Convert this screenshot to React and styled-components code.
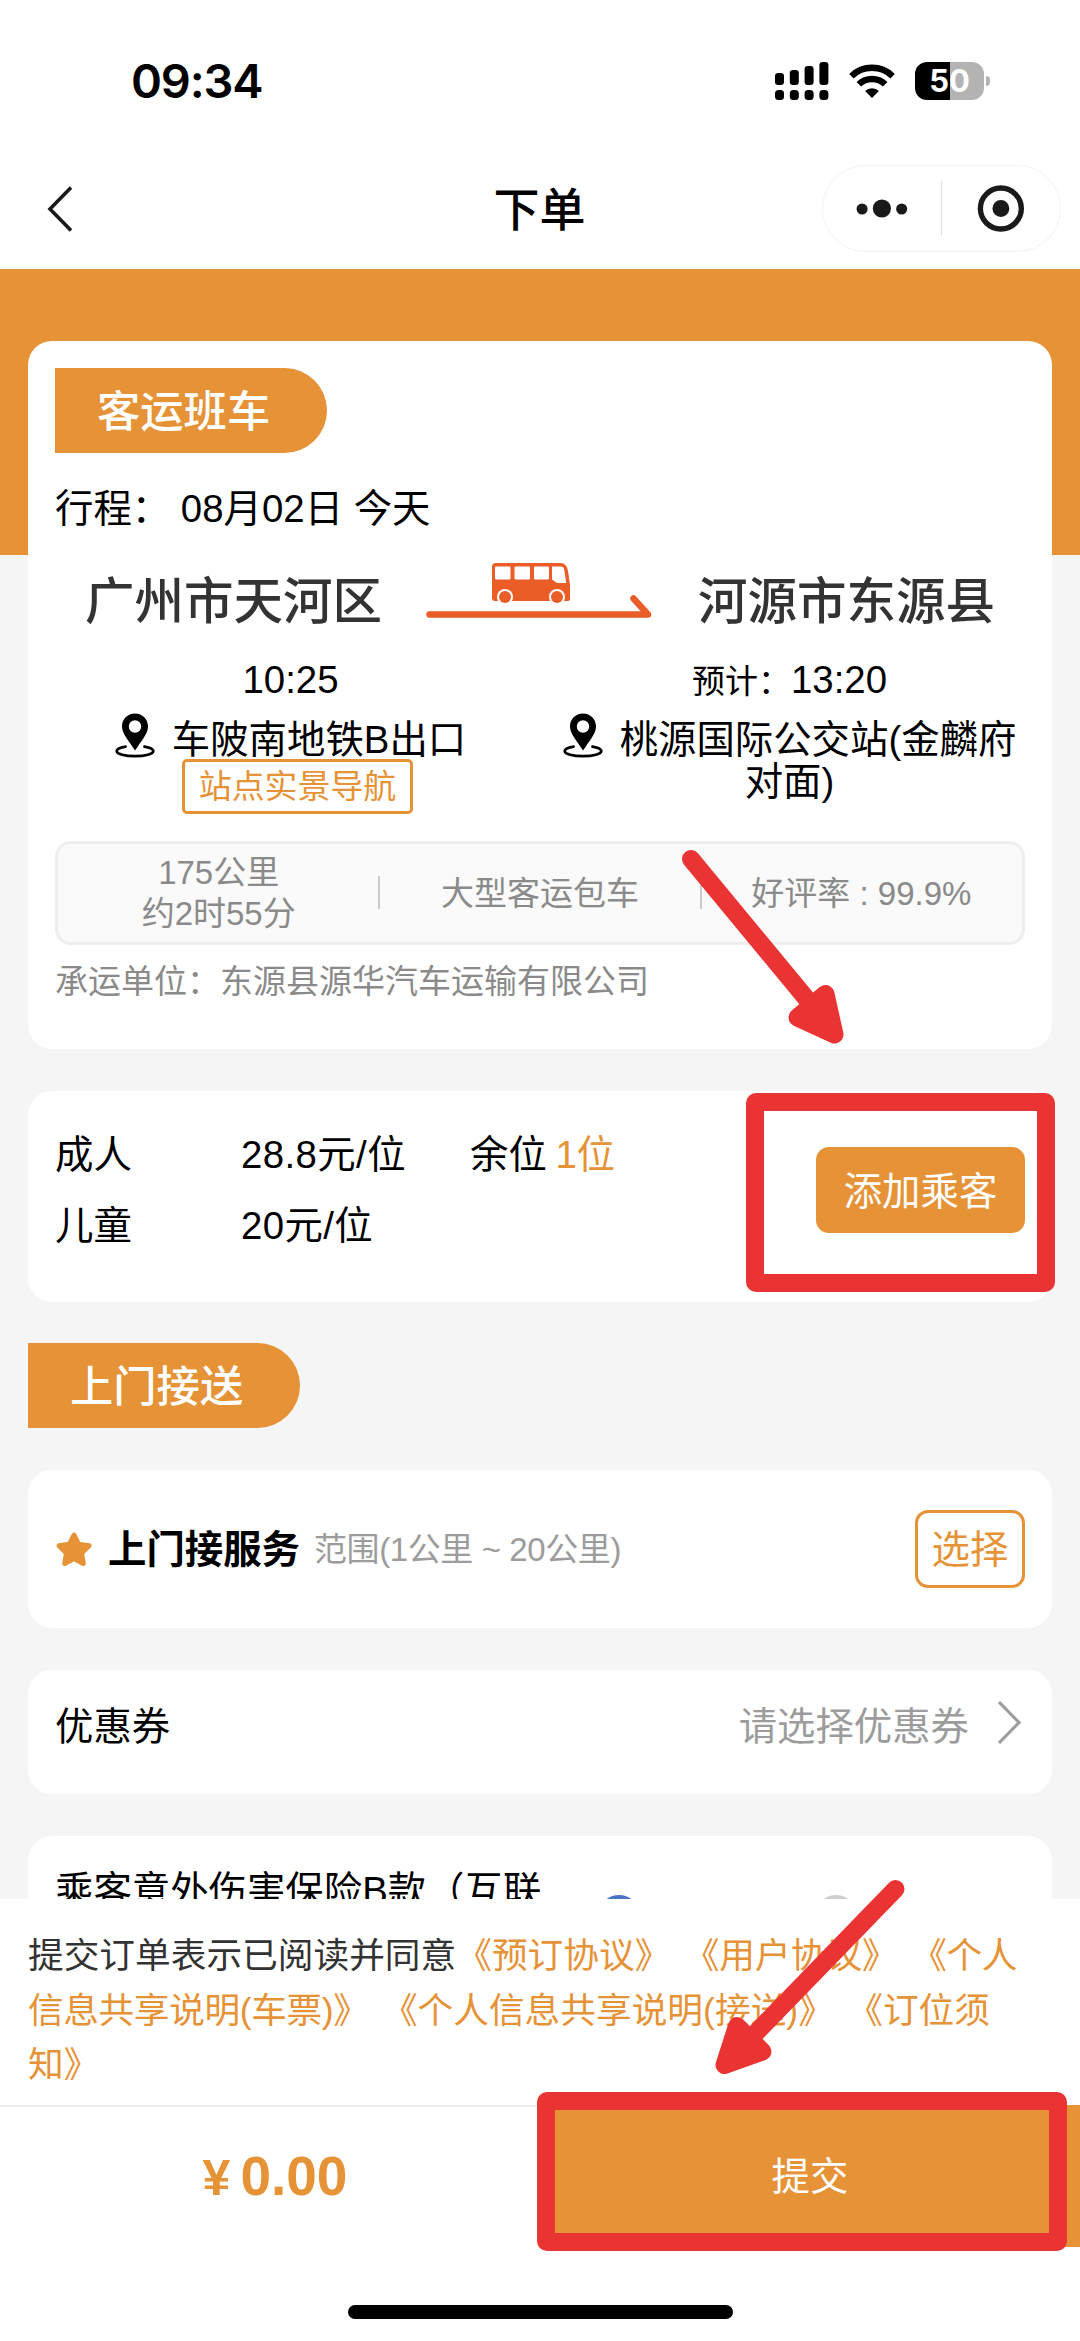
import styled, { createGlobalStyle, ThemeProvider } from "styled-components";

const theme = {
  orange: "#e69237",
  busOrange: "#ea5d27",
  red: "#ea3434",
  black: "#000",
  ink: "#333",
  grey: "#8a8a8a",
  lightgrey: "#9c9c9c",
  offWhite: "#f5f5f5",
  sans: `"Liberation Sans", "Noto Sans CJK SC", sans-serif`
};

const GlobalStyle = createGlobalStyle`
  *, *:before, *:after {
    box-sizing: border-box;
  }
  body {
    margin: 0;
    background: white;
  }
`;

const Page = styled.div`
  position: relative;
  display: flex;
  flex-direction: column;
  width: 1080px;
  height: 2341px;
  overflow: hidden;
  background: white;
  color: ${props => props.theme.black};
  font-family: ${props => props.theme.sans};
  font-size: 38.4px;
  line-height: 44px;
`;

/* ---------- top of the screen ---------- */

const StatusBar = styled.div`
  flex: none;
  display: flex;
  justify-content: space-between;
  align-items: center;
  height: 140px;
  padding: 21px 90px 0 131px;
`;

const Clock = styled.span`
  font-family: Inter, sans-serif;
  font-size: 47px;
  font-weight: 600;
  letter-spacing: -1.2px;
`;

const StatusIcons = styled.div`
  display: flex;
  align-items: center;
  gap: 20px;
`;

const Battery = styled.div`
  position: relative;
  width: 69px;
  height: 38px;
  margin-right: 6px;
  border-radius: 12px;
  background: linear-gradient(90deg, #000 51%, #b3b3b3 51%);
  color: white;
  font-family: Inter, sans-serif;
  font-size: 31px;
  font-weight: 700;
  line-height: 38px;
  text-align: center;
  &:after {
    content: "";
    position: absolute;
    right: -6px;
    top: 14px;
    width: 4px;
    height: 10px;
    border-radius: 0 4px 4px 0;
    background: #b3b3b3;
  }
`;

const NavBar = styled.div`
  flex: none;
  display: grid;
  grid-template-columns: 1fr auto 1fr;
  align-items: center;
  height: 129px;
  padding: 8px 19px 0 46px;
`;

const NavTitle = styled.h1`
  margin: 0;
  padding: 2px 28px 0 0;
  font-size: 46px;
  font-weight: 500;
  line-height: 60px;
`;

const Capsule = styled.div`
  justify-self: end;
  display: flex;
  align-items: center;
  width: 239px;
  height: 87px;
  border: 1.5px solid #f3f3f3;
  border-radius: 44px;
  svg {
    flex: 1;
  }
`;

const CapsuleLine = styled.div`
  width: 1.5px;
  height: 55px;
  background: #dedede;
`;

/* ---------- scrolling content ---------- */

const Content = styled.main`
  flex: none;
  height: 1630px;
  overflow: hidden;
  padding: 72px 28px 0;
  background: linear-gradient(
    ${props => props.theme.orange} 286px,
    ${props => props.theme.offWhite} 286px
  );
`;

const Card = styled.section`
  height: ${props => props.$height}px;
  margin-bottom: ${props => props.$gap}px;
  padding: 0 27px;
  border-radius: 24px;
  background: white;
`;

const TripCard = styled(Card)`
  padding-top: 27px;
`;

const RowCard = styled(Card)`
  display: flex;
  justify-content: space-between;
  align-items: center;
`;

const Badge = styled.h2`
  width: 272px;
  height: 85px;
  margin: 0 0 ${props => props.$gap}px;
  padding-left: 42px;
  border-radius: 0 43px 43px 0;
  background: ${props => props.theme.orange};
  color: white;
  font-size: 43.3px;
  font-weight: 500;
  line-height: 88px;
`;

const TripDate = styled.p`
  margin: 0;
  line-height: 46px;
`;

const Route = styled.div`
  display: flex;
  align-items: center;
  margin-top: 40px;
  padding-left: 30px;
  height: 60px;
`;

const City = styled.strong`
  width: 300px;
  color: ${props => props.theme.ink};
  font-size: 49.5px;
  font-weight: 500;
  line-height: 60px;
  white-space: nowrap;
`;

const RouteArrow = styled.svg`
  flex: none;
  margin: -25px 38px 0 35px;
`;

const Stops = styled.div`
  display: grid;
  grid-template-columns: 1fr 1fr;
  margin-top: 26px;
`;

const Stop = styled.div`
  text-align: center;
  padding: ${props => (props.$arrival ? "0 0 0 14px" : "0 14px 0 0")};
`;

const StopTime = styled.div`
  height: 44px;
  small {
    font-size: 33px;
    line-height: 1;
  }
`;

const StopName = styled.div`
  margin-top: 17px;
  line-height: 41.5px;
  svg {
    margin: -10px 17px -10px 0;
    vertical-align: 5px;
  }
`;

const PhotoNavButton = styled.button`
  display: block;
  width: 231px;
  height: 55px;
  margin: -2px auto 0;
  padding: 0;
  border: 3px solid ${props => props.theme.orange};
  border-radius: 5px;
  background: white;
  color: ${props => props.theme.orange};
  font-family: inherit;
  font-size: 32.9px;
  line-height: 49px;
  transform: translateX(7px);
`;

const Facts = styled.div`
  display: grid;
  grid-template-columns: repeat(3, 1fr);
  align-items: center;
  height: 104px;
  margin-top: 27px;
  border: 3px solid #eee;
  border-radius: 16px;
  background: #fafafa;
  color: ${props => props.theme.grey};
  font-size: 33px;
  line-height: 41px;
  text-align: center;
`;

const Fact = styled.div`
  display: flex;
  flex-direction: column;
  justify-content: center;
  padding-top: 1px;
  & + & {
    position: relative;
  }
  & + &:before {
    content: "";
    position: absolute;
    left: -1px;
    top: 50%;
    width: 2px;
    height: 33px;
    margin-top: -17px;
    background: #ccc;
  }
`;

const Carrier = styled.p`
  margin: 15px 0 0;
  color: ${props => props.theme.grey};
  font-size: 33px;
`;

const FareTable = styled.div`
  display: grid;
  grid-template-columns: 186px 229px auto;
  row-gap: 27px;
  margin-top: -13px;
`;

const Fare = styled.span`
  letter-spacing: 0.4px;
`;

const Seats = styled.span`
  margin-left: -2px;
  color: ${props => props.theme.orange};
`;

const AddButton = styled.button`
  width: 209px;
  height: 86px;
  margin-top: -13px;
  padding: 3px 0 0;
  border: 0;
  border-radius: 13px;
  background: ${props => props.theme.orange};
  color: white;
  font-family: inherit;
  font-size: 38.4px;
  line-height: 44px;
`;

const ServiceName = styled.div`
  display: flex;
  align-items: center;
  padding-top: 2px;
  strong {
    margin: 0 14px 0 15px;
    font-weight: 700;
  }
  span {
    color: ${props => props.theme.lightgrey};
    font-size: 33px;
    letter-spacing: -0.4px;
  }
`;

const ChooseButton = styled.button`
  width: 110px;
  height: 78px;
  padding: 0;
  border: 3px solid ${props => props.theme.orange};
  border-radius: 13px;
  background: white;
  color: ${props => props.theme.orange};
  font-family: inherit;
  font-size: 38.4px;
  line-height: 74px;
`;

const CouponHint = styled.span`
  display: flex;
  align-items: center;
  gap: 26px;
  color: ${props => props.theme.lightgrey};
  svg {
    margin-top: -8px;
  }
`;

const Coupon = styled(RowCard)`
  padding-bottom: 11px;
`;

const InsuranceCard = styled(Card)`
  display: flex;
  align-items: flex-start;
  padding-top: 33px;
`;

const InsuranceName = styled.div`
  flex: none;
  width: 543px;
`;

const Radio = styled.span`
  flex: none;
  width: 42px;
  height: 42px;
  margin: 26px 175px 0 0;
  border: 4px solid ${props => (props.$checked ? "#4a74c9" : "#cfcfcf")};
  border-radius: 50%;
  background: ${props => (props.$checked ? "#4a74c9" : "white")};
`;

/* ---------- footer ---------- */

const Agreement = styled.div`
  flex: none;
  height: 206px;
  padding: 30px 36px 0 28px;
  color: ${props => props.theme.ink};
  font-size: 35.7px;
  line-height: 54.5px;
  text-spacing-trim: space-all;
`;

const AgreementLink = styled.a`
  margin-right: 3.4px;
  color: ${props => props.theme.orange};
  letter-spacing: ${props => (props.$tight ? "-0.4px" : "normal")};
`;

const PayBar = styled.div`
  flex: none;
  display: grid;
  grid-template-columns: 1fr 1fr;
  grid-template-rows: 142px;
  height: 142px;
`;

const Price = styled.div`
  display: flex;
  justify-content: center;
  align-items: baseline;
  padding: 39px 0 0 10px;
  border-top: 2px solid #ededed;
  color: ${props => props.theme.orange};
  font-size: 55px;
  font-weight: 700;
  line-height: 60px;
  small {
    margin-right: 10px;
    font-size: 50px;
  }
`;

const SubmitButton = styled.button`
  padding: 2px 0 0;
  border: 0;
  background: ${props => props.theme.orange};
  color: white;
  font-family: inherit;
  font-size: 38.4px;
  line-height: 44px;
`;

const HomeBar = styled.div`
  flex: none;
  width: 385px;
  height: 14px;
  margin: 58px auto 0;
  border-radius: 7px;
  background: black;
`;

/* ---------- red marks lying over the page ---------- */

const Mark = styled.div`
  position: absolute;
  border: 18px solid ${props => props.theme.red};
  border-radius: 10px;
`;

const AddMark = styled(Mark)`
  left: 746px;
  top: 1092.5px;
  width: 309px;
  height: 199px;
`;

const SubmitMark = styled(Mark)`
  left: 537px;
  top: 2092px;
  width: 530px;
  height: 159px;
`;

const Pointers = styled.svg`
  position: absolute;
  left: 0;
  top: 0;
  pointer-events: none;
`;

const SIGNAL = [12, 15, 19, 23];

const Signal = () => (
  <svg width="54" height="38" viewBox="0 0 54 38">
    {SIGNAL.map((h, i) => (
      <g key={h}>
        <rect x={i * 14.8} y={23 - h} width="9" height={h} rx="3.2" />
        <rect x={i * 14.8} y="28" width="9" height="10" rx="3.5" />
      </g>
    ))}
  </svg>
);

const Wifi = () => (
  <svg width="46" height="34" viewBox="0 0 46 34">
    <g fill="none" stroke="#000" strokeWidth="6.4">
      <path d="M2.4 12.2a29.5 29.5 0 0 1 41.2 0" />
      <path d="M9.8 20.3a19 19 0 0 1 26.4 0" />
    </g>
    <path d="M23 34l-6.9-7a10 10 0 0 1 13.8 0z" />
  </svg>
);

const Pin = () => (
  <svg width="40" height="45" viewBox="0 0 40 45">
    <path
      fillRule="evenodd"
      d="M20 .5C12.5.5 7 6.2 7 13.4 7 20.5 14 28 20 37.5 26 28 33 20.5 33 13.4 33 6.2 27.5.5 20 .5zM20 7.3a6.2 6.2 0 1 1 0 12.4 6.2 6.2 0 0 1 0-12.4z"
    />
    <path
      d="M10.5 33.7C4.5 34.8 1.7 36.5 1.7 38c0 3 8 5.2 18.3 5.2S38.3 41 38.3 38c0-1.5-2.8-3.2-8.8-4.3"
      fill="none"
      stroke="#000"
      strokeWidth="2.8"
      strokeLinecap="round"
    />
  </svg>
);

const BusRoute = () => (
  <RouteArrow width="240" height="80" viewBox="0 0 240 80">
    <path
      d="M9.5 64.5H228L213.5 48.5"
      fill="none"
      stroke={theme.busOrange}
      strokeWidth="6.5"
      strokeLinecap="round"
      strokeLinejoin="round"
    />
    <path
      d="M76 13h64c5 0 7 3 8 8l2 14v14q0 2-2 2H75q-3 0-3-3V17q0-4 4-4z"
      fill={theme.busOrange}
    />
    <g fill="#fff">
      <rect x="75" y="16.5" width="15.5" height="13" rx="1" />
      <rect x="94.5" y="16.5" width="15.5" height="13" rx="1" />
      <rect x="114" y="16.5" width="15" height="13" rx="1" />
      <path d="M132 16.5h9q2.5 0 3.2 3l2 13.5h-9.2l-5-3.5z" />
      <circle cx="85" cy="47" r="8" />
      <circle cx="137" cy="47" r="8" />
    </g>
    <g fill={theme.busOrange}>
      <circle cx="85" cy="47" r="6" />
      <circle cx="137" cy="47" r="6" />
    </g>
  </RouteArrow>
);

const Star = () => (
  <svg width="38" height="38" viewBox="0 0 38 38">
    <path
      d="M19 4l4.6 9.3 10.4 1.5-7.5 7.3 1.8 10.4L19 27.6l-9.3 4.9 1.8-10.4L4 14.8l10.4-1.5z"
      fill={theme.orange}
      stroke={theme.orange}
      strokeWidth="5"
      strokeLinejoin="round"
    />
  </svg>
);

const App = () => {
  return (
    <ThemeProvider theme={theme}>
      <GlobalStyle />
      <Page>
        <StatusBar>
          <Clock>09:34</Clock>
          <StatusIcons>
            <Signal />
            <Wifi />
            <Battery>50</Battery>
          </StatusIcons>
        </StatusBar>
        <NavBar>
          <svg width="28" height="48" viewBox="0 0 28 48">
            <path
              d="M25 2.5L4 24l21 21.5"
              fill="none"
              stroke="#1a1a1a"
              strokeWidth="3.6"
            />
          </svg>
          <NavTitle>下单</NavTitle>
          <Capsule>
            <svg width="119" height="50" viewBox="0 0 119 50" fill="#1a1a1a">
              <circle cx="39.5" cy="25" r="5.6" />
              <circle cx="59.5" cy="24.5" r="9.2" />
              <circle cx="79.5" cy="25" r="5.6" />
            </svg>
            <CapsuleLine />
            <svg width="119" height="50" viewBox="0 0 119 50" fill="#1a1a1a">
              <circle cx="59.5" cy="24.5" r="8.5" />
              <circle
                cx="59.5"
                cy="24.5"
                r="20.7"
                fill="none"
                stroke="#1a1a1a"
                strokeWidth="5.4"
              />
            </svg>
          </Capsule>
        </NavBar>

        <Content>
          <TripCard $height={708} $gap={42}>
            <Badge $gap={33}>客运班车</Badge>
            <TripDate>行程： 08月02日 今天</TripDate>
            <Route>
              <City>广州市天河区</City>
              <BusRoute />
              <City>河源市东源县</City>
            </Route>
            <Stops>
              <Stop>
                <StopTime>10:25</StopTime>
                <StopName>
                  <Pin />
                  车陂南地铁B出口
                </StopName>
                <PhotoNavButton>站点实景导航</PhotoNavButton>
              </Stop>
              <Stop $arrival>
                <StopTime>
                  <small>预计：</small>13:20
                </StopTime>
                <StopName>
                  <Pin />
                  桃源国际公交站(金麟府对面)
                </StopName>
              </Stop>
            </Stops>
            <Facts>
              <Fact>
                <span>175公里</span>
                <span>约2时55分</span>
              </Fact>
              <Fact>大型客运包车</Fact>
              <Fact>好评率 : 99.9%</Fact>
            </Facts>
            <Carrier>承运单位：东源县源华汽车运输有限公司</Carrier>
          </TripCard>

          <RowCard $height={211} $gap={41}>
            <FareTable>
              <span>成人</span>
              <Fare>28.8元/位</Fare>
              <span>
                余位 <Seats>1位</Seats>
              </span>
              <span>儿童</span>
              <Fare>20元/位</Fare>
            </FareTable>
            <AddButton>添加乘客</AddButton>
          </RowCard>

          <Badge $gap={42}>上门接送</Badge>

          <RowCard $height={158} $gap={42}>
            <ServiceName>
              <Star />
              <strong>上门接服务</strong>
              <span>范围(1公里 ~ 20公里)</span>
            </ServiceName>
            <ChooseButton>选择</ChooseButton>
          </RowCard>

          <Coupon $height={124} $gap={42}>
            <span>优惠券</span>
            <CouponHint>
              请选择优惠券
              <svg width="30" height="46" viewBox="0 0 30 46">
                <path
                  d="M4 2l20 20.5L4 43"
                  fill="none"
                  stroke="#9c9c9c"
                  strokeWidth="3.2"
                />
              </svg>
            </CouponHint>
          </Coupon>

          <InsuranceCard $height={200} $gap={0}>
            <InsuranceName>乘客意外伤害保险B款（互联</InsuranceName>
            <Radio $checked />
            <Radio />
          </InsuranceCard>
        </Content>

        <Agreement>
          提交订单表示已阅读并同意
          <AgreementLink>《预订协议》</AgreementLink>{" "}
          <AgreementLink>《用户协议》</AgreementLink>{" "}
          <AgreementLink $tight>《个人信息共享说明(车票)》</AgreementLink>{" "}
          <AgreementLink>《个人信息共享说明(接送)》</AgreementLink>{" "}
          <AgreementLink>《订位须知》</AgreementLink>
        </Agreement>
        <PayBar>
          <Price>
            <small>¥</small>0.00
          </Price>
          <SubmitButton>提交</SubmitButton>
        </PayBar>
        <HomeBar />

        <AddMark />
        <SubmitMark />
        <Pointers
          width="1080"
          height="2341"
          viewBox="0 0 1080 2341"
          fill={theme.red}
          stroke={theme.red}
          strokeWidth="18"
          strokeLinecap="round"
          strokeLinejoin="round"
        >
          <path d="M691 859L815 1009" />
          <path d="M825.5 994L797.5 1017.5L834.5 1034.5z" />
          <path d="M895.5 1889L748 2041" />
          <path d="M737 2026L762.5 2051.5L724.5 2065z" />
        </Pointers>
      </Page>
    </ThemeProvider>
  );
};

export default App;
